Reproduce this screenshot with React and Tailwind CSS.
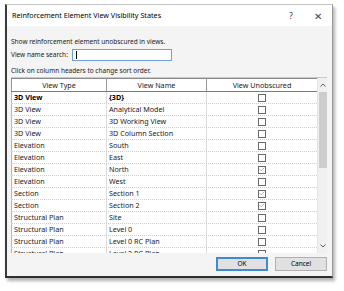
import { Check } from "lucide-react";

const rows = [
  { type: "3D View", name: "{3D}", on: false, bold: true },
  { type: "3D View", name: "Analytical Model", on: false },
  { type: "3D View", name: "3D Working View", on: false },
  { type: "3D View", name: "3D Column Section", on: false },
  { type: "Elevation", name: "South", on: false },
  { type: "Elevation", name: "East", on: false },
  { type: "Elevation", name: "North", on: true },
  { type: "Elevation", name: "West", on: false },
  { type: "Section", name: "Section 1", on: true },
  { type: "Section", name: "Section 2", on: true },
  { type: "Structural Plan", name: "Site", on: false },
  { type: "Structural Plan", name: "Level 0", on: false },
  { type: "Structural Plan", name: "Level 0 RC Plan", on: false },
  { type: "Structural Plan", name: "Level 2 RC Plan", on: false },
];

function Box({ on }) {
  return (
    <span className="w-[8px] h-[8px] border border-[#666] bg-white flex items-center justify-center">
      {on && <Check size={7} strokeWidth={1.8} className="text-[#555]" />}
    </span>
  );
}

export default function App() {
  return (
    <div className="w-[344px] h-[291px] bg-white font-['Noto_Sans',sans-serif] text-[6.5px] text-[#1a1a1a] overflow-hidden">
      <div className="ml-[5px] mt-[4px] w-[328px] h-[274px] flex flex-col border-t border-t-[#c4c4c4] border-r border-r-[#9a9a9a] border-l-2 border-l-[#3a3a3a] border-b-2 border-b-[#2e2e2e] shadow-[2px_3px_3px_rgba(0,0,0,0.3)]">
        {/* title bar */}
        <div className="h-[21px] bg-white flex items-center pl-[5px] pr-[10px] shrink-0">
          <span className="text-[7.2px] text-black flex-1">
            Reinforcement Element View Visibility States
          </span>
          <span className="text-[8px] text-[#333] w-[10px] text-center mr-[18px]">?</span>
          <span className="text-[10px] text-[#444] leading-none">✕</span>
        </div>

        <div className="flex-1 bg-[#f4f4f4] flex flex-col pl-[4px] pr-[5px] pt-[10px]">
          <p className="h-[11px] leading-[11px]">Show reinforcement element unobscured in views.</p>
          <div className="flex items-center mt-[1px] h-[14px]">
            <span className="w-[61px]">View name search:</span>
            <div className="w-[100px] h-[12px] border border-[#6fa0d6] bg-white flex items-center pl-[3px]">
              <span className="w-px h-[8px] bg-black" />
            </div>
          </div>
          <p className="h-[11px] leading-[11px] mt-[3px]">Click on column headers to change sort order.</p>

          {/* grid */}
          <div className="mt-[1px] h-[176px] flex border-t border-t-[#c9c9c9] overflow-hidden text-[7.2px]">
            <div className="flex-1 flex flex-col bg-white">
              <div className="h-[14px] shrink-0 flex border-b border-b-[#7a7a7a] border-t border-t-[#8a8a8a] bg-white">
                <div className="w-[96px] border-r border-[#9a9a9a] border-l border-l-[#9a9a9a] flex items-center justify-center">View Type</div>
                <div className="w-[100px] border-r border-[#9a9a9a] flex items-center justify-center">View Name</div>
                <div className="flex-1 flex items-center justify-center">View Unobscured</div>
              </div>
              {rows.map((r) => (
                <div
                  key={r.name}
                  className={`h-[12px] shrink-0 flex border-b border-dotted border-b-[#cfcfcf] ${r.bold ? "font-bold text-black" : ""}`}
                >
                  <div className="w-[96px] border-r border-[#dcdcdc] border-l border-l-[#b8b8b8] pl-[2px] flex items-center">{r.type}</div>
                  <div className="w-[100px] border-r border-[#dcdcdc] pl-[2px] flex items-center">{r.name}</div>
                  <div className="flex-1 flex items-center justify-center">
                    <Box on={r.on} />
                  </div>
                </div>
              ))}
            </div>

            {/* scrollbar */}
            <div className="w-[10px] bg-[#f0f0f0] flex flex-col items-center border-l border-[#e4e4e4]">
              <div className="h-[14px] w-full flex items-center justify-center text-[#606060]">
                <svg width="6" height="4" viewBox="0 0 6 4"><path d="M0.5 3.5 L3 1 L5.5 3.5" fill="none" stroke="currentColor" strokeWidth="1" /></svg>
              </div>
              <div className="w-[8px] h-[76px] bg-[#cdcdcd]" />
              <div className="flex-1" />
              <div className="h-[14px] w-full flex items-center justify-center text-[#606060]">
                <svg width="6" height="4" viewBox="0 0 6 4"><path d="M0.5 0.5 L3 3 L5.5 0.5" fill="none" stroke="currentColor" strokeWidth="1" /></svg>
              </div>
            </div>
          </div>

          {/* buttons */}
          <div className="flex justify-end gap-[7px] mt-[4px]">
            <button className="w-[52px] h-[14px] bg-[#e1e1e1] border-2 border-[#3f8ad4] text-[6.5px] text-black">OK</button>
            <button className="w-[52px] h-[14px] bg-[#e1e1e1] border border-[#b0b0b0] text-[6.5px] text-black">Cancel</button>
          </div>
        </div>
      </div>
    </div>
  );
}
